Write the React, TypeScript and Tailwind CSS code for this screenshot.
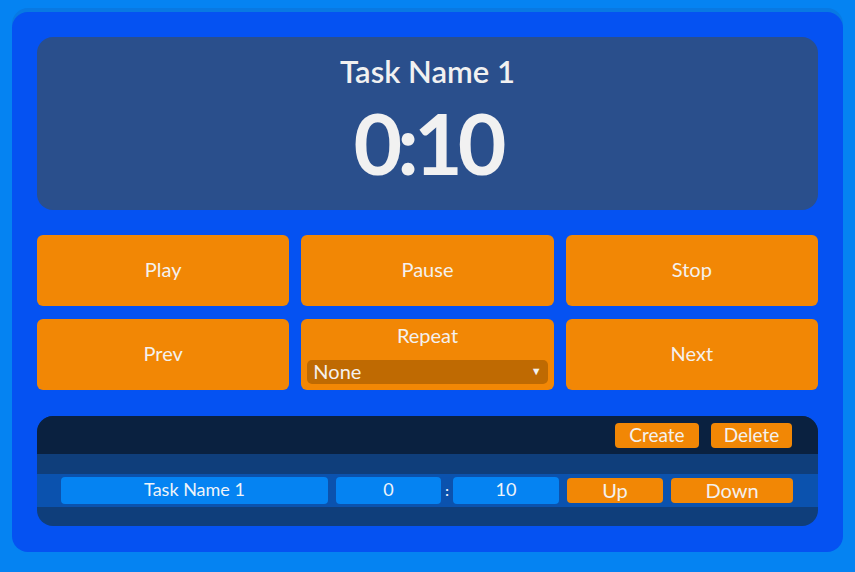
const font = { fontFamily: "Lato, 'Noto Sans', sans-serif" }

const Btn = ({ label }: { label: string }) => (
  <button className="h-[71px] rounded-[6px] bg-[#f28705] pb-[3px] text-[20px] text-[#f4f1ee]">
    {label}
  </button>
)

const Field = ({ value, w }: { value: string; w: string }) => (
  <div className={`${w} h-[27px] rounded-[4px] bg-[#0583f2] flex items-center justify-center pb-[2px] text-[18px] text-[#eef3f9]`}>
    {value}
  </div>
)

export default function App() {
  return (
    <div style={font} className="w-full h-[572px] bg-[#0583f2] p-3">
      <div className="h-[540px] rounded-2xl bg-[#0552f2] p-[25px] flex flex-col shadow-[0_-4px_0_#0879e3]">
        <div className="h-[173px] rounded-2xl bg-[#2a4f8c] flex flex-col items-center text-[#f1f1f1]">
          <div className="mt-[15px] text-[31px] font-semibold leading-[38px]">Task Name 1</div>
          <div className="mt-[3px] text-[84px] font-bold leading-[100px] tracking-[-5px]">0:10</div>
        </div>

        <div className="mt-[25px] grid grid-cols-3 gap-x-3 gap-y-[13px]">
          <Btn label="Play" />
          <Btn label="Pause" />
          <Btn label="Stop" />
          <Btn label="Prev" />
          <div className="h-[71px] rounded-[6px] bg-[#f28705] flex flex-col items-center px-[6px] text-[#f4f1ee]">
            <div className="mt-[3px] text-[20px] leading-[26px]">Repeat</div>
            <div className="mt-[12px] w-full h-[24px] rounded-[5px] bg-[#bf6a02] flex items-center justify-between px-[6px] pb-[3px]">
              <span className="text-[20px] leading-none">None</span>
              <span className="text-[11px] leading-none">▼</span>
            </div>
          </div>
          <Btn label="Next" />
        </div>

        <div className="mt-[26px] h-[110px] rounded-2xl overflow-hidden bg-[#0f3e7b] flex flex-col">
          <div className="h-[38px] bg-[#0a2140] flex items-center justify-end gap-3 pr-[26px]">
            <button className="w-[84px] h-[25px] rounded-[4px] bg-[#f28705] pb-[2px] text-[19px] leading-none text-[#f4f1ee]">Create</button>
            <button className="w-[81px] h-[25px] rounded-[4px] bg-[#f28705] pb-[2px] text-[19px] leading-none text-[#f4f1ee]">Delete</button>
          </div>
          <div className="mt-[20px] h-[33px] bg-[#0b52ae] flex items-center pl-[24px]">
            <Field value="Task Name 1" w="w-[267px]" />
            <div className="ml-[8px]">
              <Field value="0" w="w-[105px]" />
            </div>
            <span className="w-[12px] text-center text-[14px] leading-none text-[#eef3f9] font-bold">:</span>
            <Field value="10" w="w-[106px]" />
            <button className="ml-[8px] w-[96px] h-[25px] rounded-[4px] bg-[#f28705] pb-[2px] text-[20px] leading-none text-[#f4f1ee]">Up</button>
            <button className="ml-[8px] w-[122px] h-[25px] rounded-[4px] bg-[#f28705] pb-[2px] text-[20px] leading-none text-[#f4f1ee]">Down</button>
          </div>
        </div>
      </div>
    </div>
  )
}
